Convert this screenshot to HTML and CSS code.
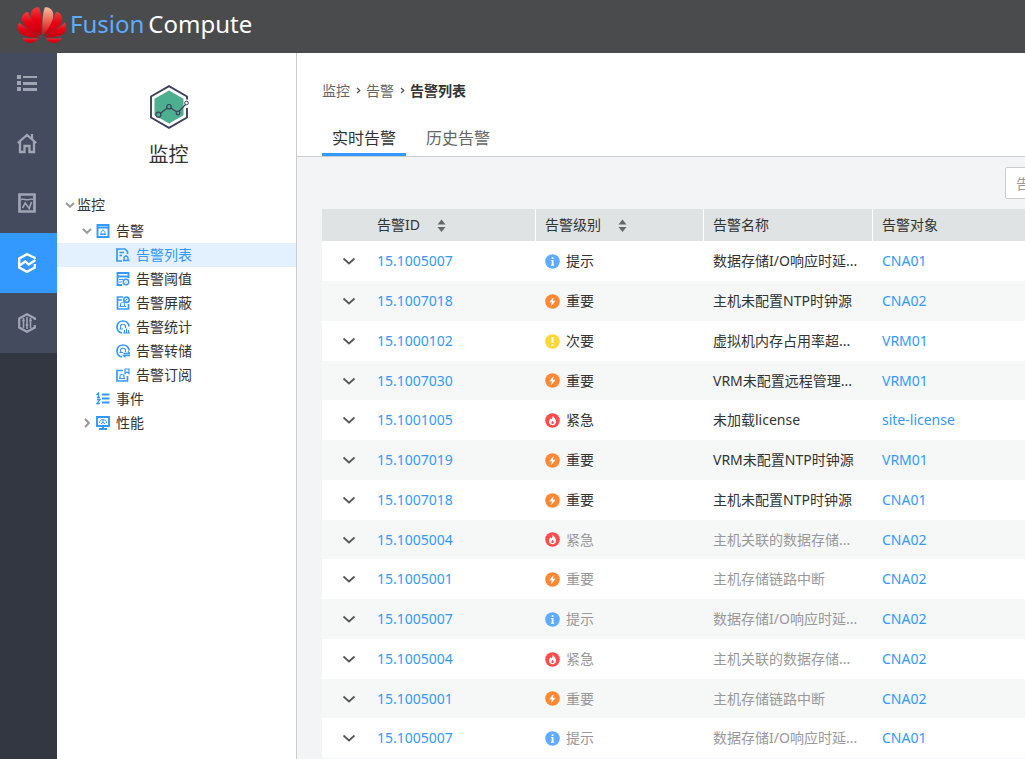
FILE: index.html
```html
<!DOCTYPE html>
<html lang="zh-CN">
<head>
<meta charset="utf-8">
<title>FusionCompute</title>
<link rel="stylesheet" href="styles.css">
</head>
<body>
<svg class="sprite" aria-hidden="true">
  <symbol id="chevron" viewBox="0 0 14 8"><path d="M1.500 1.500 7 6.500 12.500 1.500" fill="none" stroke="#555" stroke-width="1.700"/></symbol>
  <symbol id="tree-arrow" viewBox="0 0 10 6"><path d="M1 1 5 4.800 9 1" fill="none" stroke="#999" stroke-width="2"/></symbol>
  <symbol id="crumb-arrow" viewBox="0 0 5 7"><path d="M1 1 3.800 3.500 1 6" fill="none" stroke="#555" stroke-width="1.300"/></symbol>
  <symbol id="sort" viewBox="0 0 9 14"><path d="M.5 5.500 4.500.5l4 5zM.5 8h8l-4 5z" fill="#666"/></symbol>
  <symbol id="info" viewBox="0 0 15 15"><circle cx="7.500" cy="7.500" r="7.300" fill="#5eacff"/><path d="M6.700 3.200h1.800v1.700H6.700zM6.200 6h2.300v4.700h.6v1H6v-1h.7V7h-.5z" fill="#fff"/></symbol>
  <symbol id="major" viewBox="0 0 15 15"><circle cx="7.500" cy="7.500" r="7.300" fill="#ff8833"/><path d="M8.600 2.900 4.300 8.200h2.500l-.7 4 4.500-5.400H7.900z" fill="#fff"/></symbol>
  <symbol id="minor" viewBox="0 0 15 15"><circle cx="7.500" cy="7.500" r="7.300" fill="#fdd835"/><path d="M6.600 3h1.900v6H6.600zM6.600 10.200h1.900V12H6.600z" fill="#fff"/></symbol>
  <symbol id="critical" viewBox="0 0 15 15"><circle cx="7.500" cy="7.500" r="7.300" fill="#ff4c4c"/><path d="M7.700 2.200c.2 1.700 3.400 3.500 3.400 6.400 0 2-1.400 3.700-3.500 3.700S4 10.800 4 8.800c0-1.600.9-2.600 1.600-3.500l.6 1.300c1-1.200 1.700-2.500 1.500-4.400z" fill="#fff"/><path d="M7.600 7.800c-.7.900-1.200 1.300-1.200 2.100s.5 1.200 1.200 1.200 1.200-.5 1.200-1.200-.6-1.200-1.200-2.100z" fill="#ff4c4c"/></symbol>
</svg>

<header class="topbar">
  <svg class="logo" width="48" height="36" viewBox="0 0 48 36" aria-hidden="true">
    <defs>
      <linearGradient id="petal" x1="0" y1="0" x2="0" y2="1"><stop offset="0" stop-color="#ee4040"/><stop offset=".45" stop-color="#e60012"/><stop offset="1" stop-color="#c40010"/></linearGradient>
      <linearGradient id="shine" x1="0" y1="0" x2="0" y2="1"><stop offset="0" stop-color="#f6b8a0"/><stop offset=".45" stop-color="#ed6a58"/><stop offset="1" stop-color="#dc0010"/></linearGradient>
    </defs>
    <g fill="url(#petal)">
      <path d="M23 28.500C16 20 12 12 12.800 6.500 13.500 2 17 .2 21 .2c2.300 4 3.400 17 2 28.300z"/>
      <path d="M22 29.500C12 24 4 18 3.800 12 3.800 8 6.500 5.500 10 4.800 12.500 12 19 21 22 29.500z"/>
      <path d="M21 30.500C12 31 4 29.500 1.200 25-1 21.500-.5 18.500 1.200 15.500 6 20 15 25 21 30.500z"/>
      <path d="M20 31.300c-1.500 3-4.500 4.700-8 4.700-3.500 0-6-2-7.500-5 5.500.8 10 .5 15.500.3z"/>
      <path d="M26 29.500C36 24 44 18 44.200 12c0-4-2.700-6.500-6.200-7.200C35.500 12 29 21 26 29.500z"/>
      <path d="M27 30.500c9 .5 17-1 19.800-5.500 2.200-3.500 1.700-6.500 0-9.500C42 20 33 25 27 30.500z"/>
      <path d="M28 31.300c1.500 3 4.500 4.700 8 4.700 3.500 0 6-2 7.500-5-5.500.8-10 .5-15.500.3z"/>
    </g>
    <path fill="url(#shine)" d="M25 28.500C32 20 36 12 35.200 6.500 34.500 2 31 .2 27 .2c-2.300 4-3.400 17-2 28.300z"/>
  </svg>
  <h1 class="brand"><span class="brand-accent">Fusion</span><span>Compute</span></h1>
</header>

<div class="shell">
  <nav class="rail" aria-label="主导航">
    <a class="rail-item" href="#menu" aria-label="菜单"><svg width="20" height="18" viewBox="0 0 20 18" fill="currentColor"><path d="M0 1h4v4H0zM0 7h4v4H0zM0 13h4v4H0zM6 2h14v2H6zM6 8h14v3H6zM6 14h14v3H6z"/></svg></a>
    <a class="rail-item" href="#home" aria-label="首页"><svg width="20" height="22" viewBox="0 0 20 22" fill="none" stroke="currentColor" stroke-width="2.300"><path d="M.8 11 10 3l9.200 8M15 7V2M3 9v11h4.500v-6h5v6H17V9"/></svg></a>
    <a class="rail-item" href="#resource" aria-label="资源池"><svg width="18" height="20" viewBox="0 0 18 20" fill="none" stroke="currentColor"><path d="M1.500 1.500h15v17h-15z" stroke-width="2.700"/><path d="M3 6.500c3-1 5 1 8 0 2-.8 3 0 4-.2" stroke-width="1.400"/><path d="m4.500 15 2.700-5 4 5.500L13.500 9" stroke-width="1.700"/></svg></a>
    <a class="rail-item active" href="#monitor" aria-label="监控" aria-current="page"><svg width="18" height="20" viewBox="0 0 18 20" fill="none" stroke="currentColor"><path d="M17 6V5L9 1.200 1.200 5.500v9L9 18.800l7.800-4.300V11" stroke-width="2.400"/><path d="m1.500 12.500 5.800-4 3.500 3L17.500 7" stroke-width="2.200"/></svg></a>
    <a class="rail-item" href="#system" aria-label="系统管理"><svg width="18" height="20" viewBox="0 0 18 20" fill="none" stroke="currentColor"><path d="M17 7V5.500L9 1.200 1.200 5.500v9L9 18.800l7.800-4.300V12" stroke-width="2.200"/><path d="M5.500 5v10M9 4v12M12.500 5v10M4.200 7.500h2.600M7.700 12h2.600M11.200 7.500h2.600" stroke-width="1.600"/></svg></a>
  </nav>

  <aside class="side">
    <div class="side-head">
      <svg width="40" height="46" viewBox="0 0 40 46" fill="none" stroke="#3d4159" aria-hidden="true">
        <path d="m20 6.500 14.500 8.200v16.500L20 39.500 5.500 31.200V14.700z" fill="#4caf8f" stroke="none"/>
        <path d="M38 15.500v-3L20 2.200 2 12.500v21L20 43.800l18-10.300V24" stroke-width="1.900"/>
        <path d="m11.400 29.200 7-5.200M21.800 24l5.800 3.800M30 27.500l6.500-7" stroke-width="1.200"/>
        <circle cx="9.400" cy="30.700" r="2.500" stroke-width="1.200"/><circle cx="20" cy="22.700" r="2.200" stroke-width="1.200"/><circle cx="29" cy="29" r="1.800" stroke-width="1.200"/><circle cx="37.500" cy="19" r="1.800" fill="#fff" stroke-width="1"/>
      </svg>
      <h2 class="side-title">监控</h2>
    </div>
    <ul class="tree">
      <li><a class="node root" href="#m"><svg class="twist"><use href="#tree-arrow"/></svg>监控</a></li>
      <li><a class="node level-1" href="#alarm"><svg class="twist"><use href="#tree-arrow"/></svg>
        <svg class="node-icon" viewBox="0 0 14 14"><path d="M1.500 1h11v12h-11zM1.500 3.500h11" stroke-width="1.900"/><path d="M5 10V8.500C5 6 9 6 9 8.500V10zM4 10.500h6M7 5.500v1"/></svg>告警</a></li>
      <li><a class="node level-2 selected" href="#list" aria-current="page"><svg class="node-icon" viewBox="0 0 14 14"><path d="M6 13H1V1h8l2.500 2.500V6M3.500 4.500H8M3.500 7.500H6" stroke-width="1.700"/><path d="M8 12v-2c0-2.500 4-2.500 4 0v2M7 12.500h6.500M10 7v1.500" stroke-width="1.400"/></svg>告警列表</a></li>
      <li><a class="node level-2" href="#threshold"><svg class="node-icon" viewBox="0 0 14 14"><path d="M6 13H1.500V1h11v5M1.500 4.500h11" stroke-width="1.800"/><path d="M3 7.500h4M3 10h3"/><circle cx="10" cy="10" r="2.700" stroke-width="1.500"/><path d="M9.500 10h1"/></svg>告警阈值</a></li>
      <li><a class="node level-2" href="#mask"><svg class="node-icon" viewBox="0 0 14 14"><path d="M7 1H1.500v12h11V8M1.500 4H6" stroke-width="1.700"/><path d="M4.500 10.500V8c0-2 4-2 4 0v2.500M3.500 10.500h6.500"/><circle cx="10.500" cy="3.700" r="2.700" stroke-width="1.600"/><path d="m8.500 5.500 4-3.500"/></svg>告警屏蔽</a></li>
      <li><a class="node level-2" href="#stats"><svg class="node-icon" viewBox="0 0 14 14"><path d="M6 12.800C2.500 12.500.8 9.500 1 6.500 1.300 3 4 1 7 1s5.700 2 6 5.500" stroke-width="1.700"/><path d="M4.500 9V6.500c0-3 5-3 5 0V8M3.500 9H7M8.500 13.500V10M10.500 13.500v-5M12.500 13.500V10M7 13h7" stroke-width="1.200"/></svg>告警统计</a></li>
      <li><a class="node level-2" href="#dump"><svg class="node-icon" viewBox="0 0 14 14"><path d="M6 12.800C2.500 12.500.8 9.500 1 6.500 1.300 3 4 1 7 1s5.700 2 6 5.500" stroke-width="1.700"/><path d="M4.500 8.500v-2c0-3 5-3 5 0V8M3.500 8.500H7" stroke-width="1.200"/><path d="M7.500 9.500H14l-2-2M14 11.500H7.500l2 2" stroke-width="1.300"/></svg>告警转储</a></li>
      <li><a class="node level-2" href="#subscribe"><svg class="node-icon" viewBox="0 0 14 14"><path d="M7 2.500H1V13h10.500V8" stroke-width="1.700"/><path d="M4 10.500V8c0-2 4-2 4 0v2.500M3 10.500h6M9 1h4v4.500l-2-1.500-2 1.500z" stroke-width="1.200"/></svg>告警订阅</a></li>
      <li><a class="node level-1 leaf" href="#event"><svg class="node-icon" viewBox="0 0 14 14"><path d="M6 2.500h7.500M6 6.500h7.500M6 10.500h7.500" stroke-width="1.800"/><path d="M.5 3 2.500 1v4.500M.8 5.500H4M1 7.500h3l-3 4h3" stroke-width="1.300"/></svg>事件</a></li>
      <li><a class="node level-1" href="#perf"><svg class="twist closed"><use href="#tree-arrow"/></svg>
        <svg class="node-icon" viewBox="0 0 14 14"><path d="M1 1h12v9H1zM3 13h8M7 10v3" stroke-width="1.900"/><path d="M3.500 7c0-4.500 7-4.500 7 0M7 7.500v-4M5 8l2-2 2 2"/></svg>性能</a></li>
    </ul>
  </aside>

  <main class="content">
    <div class="page-head">
      <nav class="crumbs" aria-label="面包屑">
        <a href="#m">监控</a><svg class="crumb-arrow"><use href="#crumb-arrow"/></svg><a href="#alarm">告警</a><svg class="crumb-arrow"><use href="#crumb-arrow"/></svg><strong>告警列表</strong>
      </nav>
      <div class="tabs" role="tablist">
        <button class="tab current" role="tab" aria-selected="true">实时告警</button>
        <button class="tab" role="tab" aria-selected="false">历史告警</button>
      </div>
    </div>
    <div class="panel">
      <div class="toolbar"><input class="search" type="text" placeholder="告警名称" aria-label="告警名称"></div>
      <table class="alarms">
        <colgroup><col class="c-expand"><col class="c-id"><col class="c-level"><col class="c-name"><col></colgroup>
        <thead><tr>
          <th colspan="2" class="th-id">告警ID<button class="sort" aria-label="按告警ID排序"><svg><use href="#sort"/></svg></button></th>
          <th>告警级别<button class="sort" aria-label="按告警级别排序"><svg><use href="#sort"/></svg></button></th>
          <th>告警名称</th><th>告警对象</th>
        </tr></thead>
        <tbody>
          <tr><td><button class="expand" aria-label="展开"><svg><use href="#chevron"/></svg></button></td><td><a href="#a">15.1005007</a></td><td><span class="level"><svg><use href="#info"/></svg>提示</span></td><td>数据存储I/O响应时延...</td><td><a href="#o">CNA01</a></td></tr>
          <tr><td><button class="expand" aria-label="展开"><svg><use href="#chevron"/></svg></button></td><td><a href="#a">15.1007018</a></td><td><span class="level"><svg><use href="#major"/></svg>重要</span></td><td>主机未配置NTP时钟源</td><td><a href="#o">CNA02</a></td></tr>
          <tr><td><button class="expand" aria-label="展开"><svg><use href="#chevron"/></svg></button></td><td><a href="#a">15.1000102</a></td><td><span class="level"><svg><use href="#minor"/></svg>次要</span></td><td>虚拟机内存占用率超...</td><td><a href="#o">VRM01</a></td></tr>
          <tr><td><button class="expand" aria-label="展开"><svg><use href="#chevron"/></svg></button></td><td><a href="#a">15.1007030</a></td><td><span class="level"><svg><use href="#major"/></svg>重要</span></td><td>VRM未配置远程管理...</td><td><a href="#o">VRM01</a></td></tr>
          <tr><td><button class="expand" aria-label="展开"><svg><use href="#chevron"/></svg></button></td><td><a href="#a">15.1001005</a></td><td><span class="level"><svg><use href="#critical"/></svg>紧急</span></td><td>未加载license</td><td><a href="#o">site-license</a></td></tr>
          <tr><td><button class="expand" aria-label="展开"><svg><use href="#chevron"/></svg></button></td><td><a href="#a">15.1007019</a></td><td><span class="level"><svg><use href="#major"/></svg>重要</span></td><td>VRM未配置NTP时钟源</td><td><a href="#o">VRM01</a></td></tr>
          <tr><td><button class="expand" aria-label="展开"><svg><use href="#chevron"/></svg></button></td><td><a href="#a">15.1007018</a></td><td><span class="level"><svg><use href="#major"/></svg>重要</span></td><td>主机未配置NTP时钟源</td><td><a href="#o">CNA01</a></td></tr>
          <tr class="cleared"><td><button class="expand" aria-label="展开"><svg><use href="#chevron"/></svg></button></td><td><a href="#a">15.1005004</a></td><td><span class="level"><svg><use href="#critical"/></svg>紧急</span></td><td>主机关联的数据存储...</td><td><a href="#o">CNA02</a></td></tr>
          <tr class="cleared"><td><button class="expand" aria-label="展开"><svg><use href="#chevron"/></svg></button></td><td><a href="#a">15.1005001</a></td><td><span class="level"><svg><use href="#major"/></svg>重要</span></td><td>主机存储链路中断</td><td><a href="#o">CNA02</a></td></tr>
          <tr class="cleared"><td><button class="expand" aria-label="展开"><svg><use href="#chevron"/></svg></button></td><td><a href="#a">15.1005007</a></td><td><span class="level"><svg><use href="#info"/></svg>提示</span></td><td>数据存储I/O响应时延...</td><td><a href="#o">CNA02</a></td></tr>
          <tr class="cleared"><td><button class="expand" aria-label="展开"><svg><use href="#chevron"/></svg></button></td><td><a href="#a">15.1005004</a></td><td><span class="level"><svg><use href="#critical"/></svg>紧急</span></td><td>主机关联的数据存储...</td><td><a href="#o">CNA02</a></td></tr>
          <tr class="cleared"><td><button class="expand" aria-label="展开"><svg><use href="#chevron"/></svg></button></td><td><a href="#a">15.1005001</a></td><td><span class="level"><svg><use href="#major"/></svg>重要</span></td><td>主机存储链路中断</td><td><a href="#o">CNA02</a></td></tr>
          <tr class="cleared"><td><button class="expand" aria-label="展开"><svg><use href="#chevron"/></svg></button></td><td><a href="#a">15.1005007</a></td><td><span class="level"><svg><use href="#info"/></svg>提示</span></td><td>数据存储I/O响应时延...</td><td><a href="#o">CNA01</a></td></tr>
        </tbody>
      </table>
    </div>
  </main>
</div>
</body>
</html>
```

FILE: styles.css
```css
* { box-sizing: border-box; }

body {
  margin: 0;
  height: 100vh;
  display: flex;
  flex-direction: column;
  overflow: hidden;
  font: 14px/20px "Noto Sans", "Noto Sans CJK SC", sans-serif;
  color: #333;
}

a { color: inherit; text-decoration: none; }
button { padding: 0; border: 0; background: none; font: inherit; color: inherit; cursor: pointer; }
svg { display: block; flex: none; }
.sprite { position: absolute; width: 0; height: 0; }

/* Top bar */
.topbar {
  flex: none;
  display: flex;
  align-items: center;
  gap: 4px;
  height: 53px;
  padding: 0 18px 4px;
  background: #4a4b4c;
}
.brand { display: flex; gap: 4px; margin: 0; padding-bottom: 2px; font-size: 24px; line-height: 32px; font-weight: 400; color: #fff; }
.brand-accent { color: #5eacff; }

.shell { flex: 1; min-height: 0; display: flex; }

/* Icon rail */
.rail { flex: none; width: 57px; background: #333742; }
.rail-item {
  display: flex;
  align-items: center;
  justify-content: center;
  height: 60px;
  padding-right: 3px;
  background: #454b5f;
  color: #a0a5b3;
}
.rail-item.active { background: #3399ff; color: #fff; }

/* Side tree */
.side { flex: none; width: 240px; border-right: 1px solid #ccc; background: #fff; }
.side-head { display: flex; flex-direction: column; align-items: center; gap: 10px; padding: 31px 16px 22px 0; }
.side-title { margin: 0; font-size: 20px; line-height: 30px; font-weight: 400; }
.tree { margin: 0; padding: 0; list-style: none; }
.node { display: flex; align-items: center; gap: 6px; height: 24px; }
.root { height: 27px; padding: 0 0 2px 8px; gap: 2px; }
.level-1 { padding-left: 25px; }
.leaf { padding-left: 39px; }
.level-2 { padding-left: 59px; }
.selected { background: #e3f1ff; color: #3399ff; }
.twist { width: 10px; height: 6px; }
.level-1 .twist { margin-right: -2px; }
.closed { transform: rotate(-90deg); }
.node-icon { width: 14px; height: 14px; fill: none; stroke: #3399ff; }

/* Content */
.content { flex: 1; min-width: 0; display: flex; flex-direction: column; overflow: hidden; background: #f3f4f6; }
.page-head { padding: 28px 0 0 25px; background: #fff; border-bottom: 1px solid #ccc; }
.crumbs { display: flex; align-items: center; color: #666; }
.crumb-arrow { width: 5px; height: 7px; margin: 0 5px 2px 6px; }
.crumbs strong { color: #333; }
.tabs { display: flex; gap: 10px; margin-top: 20px; }
.tab { height: 35px; padding: 2px 10px 0; border-bottom: 3px solid transparent; font-size: 16px; color: #666; }
.tab.current { border-bottom-color: #3399ff; color: #333; }

.panel { min-width: 900px; padding: 10px 16px 0 25px; }
.toolbar { display: flex; justify-content: flex-end; width: 860px; margin-bottom: 10px; }
.search { width: 177px; height: 32px; padding: 0 10px; border: 1px solid #ccc; border-radius: 2px; font: inherit; }
.search::placeholder { color: #999; }

.alarms { width: 100%; min-width: 860px; table-layout: fixed; border-collapse: separate; border-spacing: 0; }
.c-expand { width: 46px; }
.c-id, .c-level { width: 168px; }
.c-name { width: 169px; }
.alarms th { height: 32px; padding: 0 9px; background: #dfe3e4; border-right: 1px solid #fff; text-align: left; font-weight: 400; }
.alarms .th-id { padding-left: 55px; }
.sort { display: inline-block; margin-left: 17px; vertical-align: middle; }
.sort svg { width: 9px; height: 14px; }

.alarms td { padding: 0 9px; background: #fff; white-space: nowrap; }
.alarms tbody tr { height: 40px; }
.alarms tbody tr:nth-child(4n) { height: 39px; }
.alarms tr:nth-child(even) td { background: #f6f8f8; }
.alarms td:first-child { padding: 0 0 0 20px; }
.alarms td a { color: #3399ff; }
.alarms .cleared { color: #999; }
.expand { display: block; }
.expand svg { width: 14px; height: 8px; }
.level { display: flex; align-items: center; gap: 6px; }
.level svg { width: 15px; height: 15px; }
```
